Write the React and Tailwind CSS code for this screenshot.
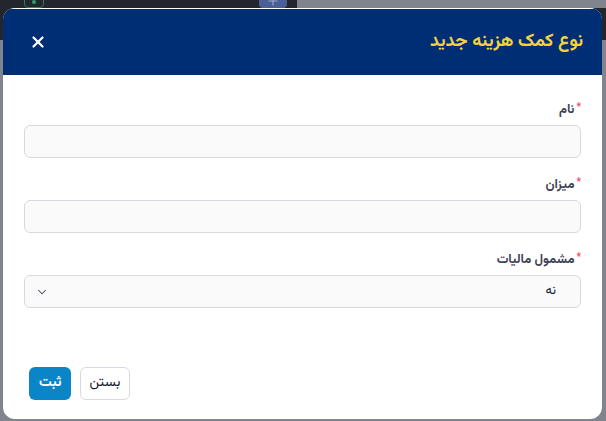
import { X, ChevronDown, Plus } from 'lucide-react';

const Field = ({ label, children }) => (
  <div className="flex flex-col gap-1.5">
    <label className="flex items-start gap-0.5 text-[13px] font-bold text-[#3f4254] leading-[18px]">
      <span className="text-[#f1416c] text-[10px] leading-none mt-0.5">*</span>
      <span>{label}</span>
    </label>
    {children}
  </div>
);

export default function App() {
  return (
    <div
      className="relative w-[606px] h-[421px] overflow-hidden bg-[#80848c]"
      style={{ fontFamily: 'Vazirmatn, Tahoma, "DejaVu Sans", "Noto Sans", sans-serif' }}
    >
      {/* page behind the overlay */}
      <div className="absolute inset-x-0 top-0 h-[40px] bg-[#23262c]">
        <div className="absolute left-[24px] top-[-4px] w-[20px] h-[12px] border border-[#2e7d5b] rounded-sm flex items-center justify-center">
          <span className="w-1 h-1 rounded-full bg-[#2e9d6b]" />
        </div>
        <div className="absolute left-[259px] top-[-6px] w-[28px] h-[14px] rounded bg-[#4a5f96] flex items-center justify-center">
          <Plus className="w-[14px] h-[14px] text-[#9aa6c6]" strokeWidth={2} />
        </div>
        <div className="absolute left-[297px] right-0 top-0 h-[8px] bg-[#80848c]" />
      </div>

      {/* modal */}
      <div dir="rtl" className="absolute left-[3px] top-[8px] w-[599px] h-[411px] bg-white rounded-[12px] overflow-hidden flex flex-col">
        <div className="h-[67px] bg-[#002e75] flex items-center justify-between pr-[19px] pl-[26px] shrink-0 border-t border-white">
          <h2 className="text-[18px] font-bold text-[#f6d33e]">نوع کمک هزینه جدید</h2>
          <X className="w-[18px] h-[18px] text-white" strokeWidth={3} />
        </div>

        <div className="flex flex-col gap-[18px] px-[21px] pt-[26px] pb-[59px]">
          <Field label="نام">
            <input className="h-[33px] w-full rounded-[6px] border border-[#d8d9e0] bg-[#fafafa]" />
          </Field>
          <Field label="میزان">
            <input className="h-[33px] w-full rounded-[6px] border border-[#d8d9e0] bg-[#fafafa]" />
          </Field>
          <Field label="مشمول مالیات">
            <div className="h-[33px] w-full rounded-[6px] border border-[#d8d9e0] bg-[#fafafa] flex items-center justify-between pr-[24px] pl-[10px]">
              <span className="text-[13px] text-[#181c32]">نه</span>
              <ChevronDown className="w-[14px] h-[14px] text-[#3f4254]" strokeWidth={1.75} />
            </div>
          </Field>
        </div>

        <div className="flex justify-end gap-[9px] pl-[26px]">
          <button className="h-[33px] px-[8px] rounded-[6px] border border-[#d8d9e0] bg-white text-[14px] text-[#181c32]">بستن</button>
          <button className="h-[33px] px-[10px] rounded-[6px] bg-[#0a86c8] text-white text-[14px] font-bold">ثبت</button>
        </div>
      </div>
    </div>
  );
}
